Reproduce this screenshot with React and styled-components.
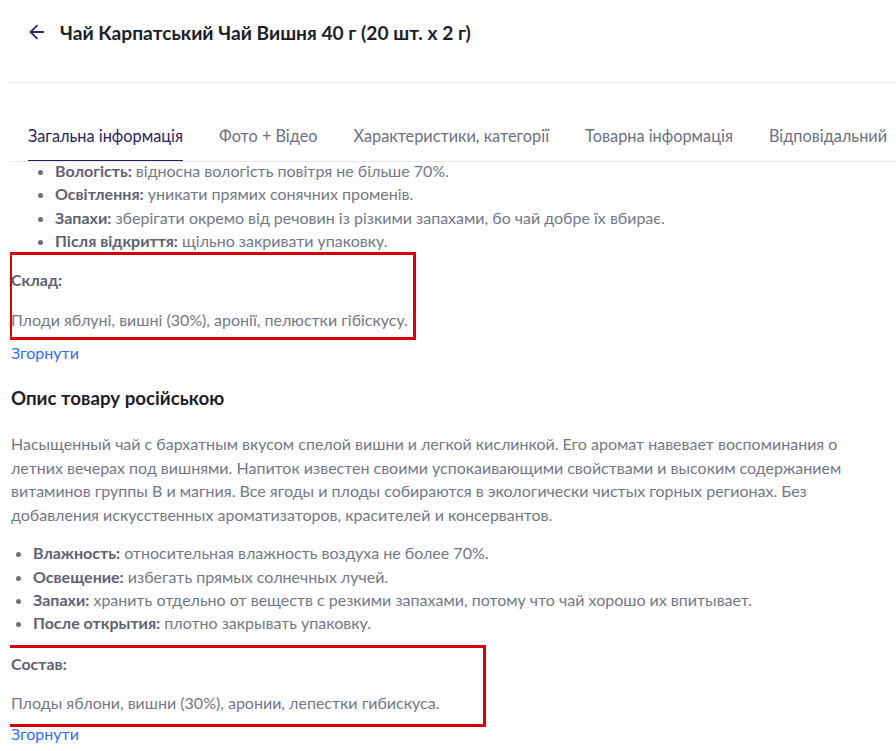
import React from "react";
import styled, { createGlobalStyle } from "styled-components";
import { ArrowLeft } from "lucide-react";

const Global = createGlobalStyle`
  html, body { margin: 0; padding: 0; background: #fff; }
  body { font-family: "Lato", "Noto Sans", sans-serif; overflow: hidden; }
  *, *::before, *::after { box-sizing: border-box; }
`;

const Page = styled.div`
  width: 896px;
  height: 751px;
  overflow: hidden;
  padding-left: 10px;
  display: flex;
  flex-direction: column;
`;

const Header = styled.header`
  height: 64px;
  display: flex;
  align-items: center;
  gap: 12px;
  padding-left: 16px;
  margin-bottom: 18px;
`;

const BackButton = styled.button`
  border: 0;
  background: none;
  padding: 0;
  display: flex;
  color: #3b2a6b;
  cursor: pointer;
`;

const Title = styled.h1`
  margin: 0;
  font-size: 19.2px;
  font-weight: 700;
  color: #1d1d2b;
`;

const Divider = styled.div`
  border-top: 1px solid #ececec;
`;

const TabBar = styled.nav`
  margin-top: 29px;
  display: flex;
  gap: 36px;
  padding-left: 18px;
  border-bottom: 1px solid #e8e8ec;
  white-space: nowrap;
  overflow: hidden;
  flex-shrink: 0;
`;

const Tab = styled.div`
  padding: 14px 0 16px;
  font-size: 16.3px;
  line-height: 20px;
  color: ${(p) => (p.$active ? "#2e1d5c" : "#6c7181")};
  box-shadow: ${(p) => (p.$active ? "inset 0 -2px 0 #2e1d5c" : "none")};
  margin-bottom: -1px;
`;

const Content = styled.div`
  flex: 1;
  overflow: hidden;
  padding-left: 1px;
  padding-right: 40px;
  font-size: 16px;
  color: #737888;
`;

const Inner = styled.div`
  margin-top: -3px;
`;

const List = styled.ul`
  margin: ${(p) => p.$mt || 0}px 0 0;
  padding-left: ${(p) => p.$indent}px;
  line-height: 23.4px;
  li::marker { color: #6c7181; }
`;

const Label = styled.b`
  font-weight: 700;
  color: #5e6272;
`;

const Para = styled.p`
  margin: ${(p) => p.$mt || 0}px 0 0;
  line-height: 23.5px;
`;

const Highlight = styled.div`
  position: relative;
  &::after {
    content: "";
    position: absolute;
    left: ${(p) => p.$left}px;
    top: ${(p) => p.$top}px;
    width: ${(p) => p.$w}px;
    height: ${(p) => p.$h}px;
    border: 3px solid #d8000b;
    pointer-events: none;
  }
`;

const Collapse = styled.a`
  display: block;
  margin-top: ${(p) => p.$mt}px;
  color: #2f6ff0;
  line-height: 23.5px;
  text-decoration: none;
  cursor: pointer;
`;

const Heading = styled.h2`
  margin: 22px 0 22px;
  font-size: 18.7px;
  font-weight: 700;
  line-height: 24px;
  color: #1d1d2b;
`;

const tabs = [
  "Загальна інформація",
  "Фото + Відео",
  "Характеристики, категорії",
  "Товарна інформація",
  "Відповідальний",
];

export default function App() {
  return (
    <Page>
      <Global />
      <Header>
        <BackButton aria-label="Назад">
          <ArrowLeft size={22} strokeWidth={2} />
        </BackButton>
        <Title>Чай Карпатський Чай Вишня 40 г (20 шт. х 2 г)</Title>
      </Header>
      <Divider />
      <TabBar>
        {tabs.map((t, i) => (
          <Tab key={t} $active={i === 0}>
            {t}
          </Tab>
        ))}
      </TabBar>
      <Content>
        <Inner>
          <List $indent={44}>
            <li>
              <Label>Вологість:</Label> відносна вологість повітря не більше 70%.
            </li>
            <li>
              <Label>Освітлення:</Label> уникати прямих сонячних променів.
            </li>
            <li>
              <Label>Запахи:</Label> зберігати окремо від речовин із різкими запахами, бо чай добре їх вбирає.
            </li>
            <li>
              <Label>Після відкриття:</Label> щільно закривати упаковку.
            </li>
          </List>
          <Highlight $left={-2} $top={-16} $w={407} $h={88}>
            <Para $mt={15}>
              <Label>Склад:</Label>
            </Para>
            <Para $mt={17}>Плоди яблуні, вишні (30%), аронії, пелюстки гібіскусу.</Para>
          </Highlight>
          <Collapse $mt={9}>Згорнути</Collapse>
          <Heading>Опис товару російською</Heading>
          <Para>
            Насыщенный чай с бархатным вкусом спелой вишни и легкой кислинкой. Его аромат навевает воспоминания о
            летних вечерах под вишнями. Напиток известен своими успокаивающими свойствами и высоким содержанием
            витаминов группы В и магния. Все ягоды и плоды собираются в экологически чистых горных регионах. Без
            добавления искусственных ароматизаторов, красителей и консервантов.
          </Para>
          <List $indent={22} $mt={15}>
            <li>
              <Label>Влажность:</Label> относительная влажность воздуха не более 70%.
            </li>
            <li>
              <Label>Освещение:</Label> избегать прямых солнечных лучей.
            </li>
            <li>
              <Label>Запахи:</Label> хранить отдельно от веществ с резкими запахами, потому что чай хорошо их впитывает.
            </li>
            <li>
              <Label>После открытия:</Label> плотно закрывать упаковку.
            </li>
          </List>
          <Highlight $left={-8} $top={-7} $w={483} $h={82}>
            <Para $mt={17}>
              <Label>Состав:</Label>
            </Para>
            <Para $mt={16}>Плоды яблони, вишни (30%), аронии, лепестки гибискуса.</Para>
          </Highlight>
          <Collapse $mt={7}>Згорнути</Collapse>
        </Inner>
      </Content>
    </Page>
  );
}
